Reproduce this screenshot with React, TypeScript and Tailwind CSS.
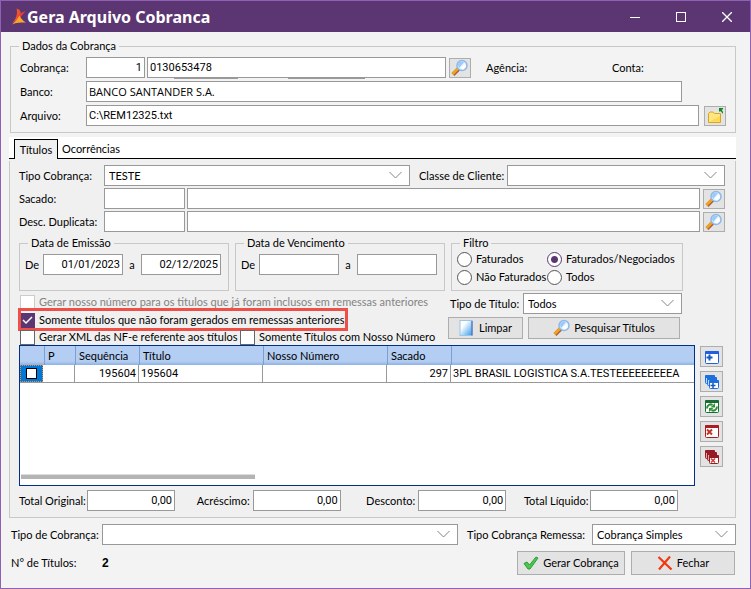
import { useState, type ReactNode } from 'react'

const FIELD = "h-[21px] border border-[#999] bg-white px-[2px] outline-none min-w-0"
const VALUE_FONT = "font-['Roboto',sans-serif]"
const BUTTON = 'flex shrink-0 items-center justify-center border border-[#adadad] bg-[#e3e3e3]'
const GROUP = 'min-w-0 border border-[#c8c8c8]'
const LEGEND = 'ml-[8px] h-[14px] px-[3px] leading-[14px]'

function AppLogo() {
  return (
    <svg width="15" height="18" viewBox="0 0 15 18">
      <path d="M4.500 0.500 C7.500 1 9 3 8.500 6 L6 11 L0 15.500 C4 11 6 6 4.500 0.500 Z" fill="#f0532d" />
      <path d="M13.500 3 L9 8.500 L5 11 L7 6 Z" fill="#ee3f34" />
      <path d="M7.500 7.500 C9 10.500 11 13 14 14.500 C9 14.500 4 14.500 0 16.500 C3 14 5.500 11 7.500 7.500 Z" fill="#fba52c" />
    </svg>
  )
}

function Magnifier() {
  return (
    <svg width="18" height="18" viewBox="0 0 18 18">
      <path d="M2 15.500 L8 9.500" stroke="#a8623a" strokeWidth="4" />
      <path d="M1.500 15 L7.500 9" stroke="#f5a31f" strokeWidth="2.500" />
      <circle cx="11" cy="6.500" r="5" fill="#d9efff" stroke="#8eb7ea" strokeWidth="1.500" />
      <path d="M7 6 A4 4 0 0 1 11 2.500 L13 3 L8 9 Z" fill="#9cc9f7" />
      <path d="M9 9 L14 4 L15 8 L12 10.500 Z" fill="#fff" />
    </svg>
  )
}

function FolderIcon() {
  return (
    <svg width="18" height="18" viewBox="0 0 18 18">
      <path d="M2.500 15.500 V6.500 L4 5 H7 L8.500 6.500 H14.500 V15.500 Z" fill="#ffe680" stroke="#d9a51c" />
      <path d="M4 14.500 H14 V9 Z" fill="#ffd84d" />
      <path d="M13 1 H17 V2.500 H15.500 L17 5 V7 L15.500 5 L14 4 L13 5 Z" fill="#0a8a1c" />
    </svg>
  )
}

function WindowShape({ x, y, size, color, fill = '#fff' }: { x: number; y: number; size: number; color: string; fill?: string }) {
  return (
    <g>
      <rect x={x + 0.5} y={y + 0.5} width={size - 1} height={size - 2} rx="1" fill={fill} stroke={color} />
      <rect x={x} y={y} width={size} height="3" rx="1" fill={color} />
    </g>
  )
}

function GridIcon({ kind }: { kind: string }) {
  return (
    <svg width="16" height="16" viewBox="0 0 16 16">
      {kind === 'add' && (
        <>
          <WindowShape x={1} y={2} size={14} color="#1f5fe0" />
          <path d="M5.500 5.500 V11.500 M2.500 8.500 H8.500" stroke="#1458c8" strokeWidth="2" />
        </>
      )}
      {kind === 'addAll' && (
        <>
          <WindowShape x={1} y={1} size={10} color="#1d6fe0" fill="#b9dcff" />
          <WindowShape x={3} y={3} size={10} color="#1d6fe0" fill="#b9dcff" />
          <WindowShape x={5} y={6} size={10} color="#1d6fe0" />
          <path d="M9 9 V14 M6.500 11.500 H11.500" stroke="#1458c8" strokeWidth="1.500" />
        </>
      )}
      {kind === 'refresh' && (
        <>
          <WindowShape x={1} y={1} size={14} color="#1a6b35" />
          <path d="M3 9.500 C3 6 6.500 4.500 8.500 6" stroke="#2f8f3a" strokeWidth="2" fill="none" />
          <path d="M6.500 8.500 H11 V4 Z" fill="#2f8f3a" />
          <path d="M13 7.500 C13 11 9.500 12.500 7.500 11" stroke="#2f8f3a" strokeWidth="2" fill="none" />
          <path d="M9.500 9 H5 V13 Z" fill="#2f8f3a" />
        </>
      )}
      {kind === 'remove' && (
        <>
          <WindowShape x={1} y={1} size={14} color="#a81c22" />
          <path d="M3 5.500 L8 10.500 M8 5.500 L3 10.500" stroke="#c83222" strokeWidth="2" />
        </>
      )}
      {kind === 'removeAll' && (
        <>
          <WindowShape x={1} y={1} size={10} color="#951c24" fill="#e3a5a5" />
          <WindowShape x={3} y={3} size={10} color="#951c24" fill="#e3a5a5" />
          <WindowShape x={5} y={6} size={10} color="#951c24" />
          <path d="M7 9.500 L11 13.500 M11 9.500 L7 13.500" stroke="#d04030" strokeWidth="1.500" />
        </>
      )}
    </svg>
  )
}

function Select({ id, options, className }: { id: string; options: string[]; className: string }) {
  return (
    <div className={`relative ${className}`}>
      <select id={id} className="block h-[21px] w-full appearance-none border border-[#999] bg-white pl-[4px] pr-[24px] leading-[18px] outline-none">
        {options.map((o) => (
          <option key={o}>{o}</option>
        ))}
      </select>
      <svg className="pointer-events-none absolute right-[8px] top-[6px]" width="13" height="8" viewBox="0 0 13 8">
        <path d="M0.500 1 L6.500 7 L12.500 1" fill="none" stroke="#858585" />
      </svg>
    </div>
  )
}

function SearchButton({ label }: { label: string }) {
  return (
    <button type="button" aria-label={label} className={`${BUTTON} h-[20px] w-[22px]`}>
      <Magnifier />
    </button>
  )
}

function Check({ id, children, checked = false, disabled = false }: { id: string; children: ReactNode; checked?: boolean; disabled?: boolean }) {
  return (
    <div className="relative flex items-center gap-[4px] whitespace-nowrap pl-[1px]">
      <input
        id={id}
        type="checkbox"
        defaultChecked={checked}
        disabled={disabled}
        className="peer h-[15px] w-[15px] appearance-none border border-[#666] bg-white checked:border-[#5b3672] checked:bg-[#5b3672] disabled:border-[#ccc]"
      />
      <svg className="pointer-events-none absolute left-[3px] hidden peer-checked:block" width="11" height="9" viewBox="0 0 11 9">
        <path d="M1 4 L4 7 L10 1" fill="none" stroke="#fff" strokeWidth="1.500" />
      </svg>
      <label htmlFor={id} className={disabled ? 'text-[#838383]' : ''}>
        {children}
      </label>
    </div>
  )
}

function DateRange({ id, legend, from, to }: { id: string; legend: string; from: string; to: string }) {
  return (
    <fieldset className={`${GROUP} w-[210px]`}>
      <legend className={LEGEND}>{legend}</legend>
      <div className="flex items-center px-[5px] pt-[4px]">
        <label htmlFor={`${id}-from`} className="w-[18px]">De</label>
        <input id={`${id}-from`} defaultValue={from} className={`${FIELD} ${VALUE_FONT} w-[80px] text-right`} />
        <label htmlFor={`${id}-to`} className="w-[18px] text-center">a</label>
        <input id={`${id}-to`} defaultValue={to} className={`${FIELD} ${VALUE_FONT} w-[80px] text-right`} />
      </div>
    </fieldset>
  )
}

function LookupRow({ id, label }: { id: string; label: string }) {
  return (
    <div className="flex items-center">
      <label htmlFor={id} className="w-[85px] shrink-0">{label}</label>
      <input id={id} className={`${FIELD} w-[81px]`} />
      <input aria-label={`${label} descrição`} className={`${FIELD} ml-[2px] mr-[3px] flex-1`} />
      <SearchButton label={`Localizar ${label}`} />
    </div>
  )
}

const filters = ['Faturados', 'Faturados/Negociados', 'Não Faturados', 'Todos']

const totals = [
  { id: 'original', label: 'Total Original:', width: 'w-[68px]' },
  { id: 'acrescimo', label: 'Acréscimo:', width: 'w-[60px]' },
  { id: 'desconto', label: 'Desconto:', width: 'w-[60px]' },
  { id: 'liquido', label: 'Total Líquido:', width: 'w-[66px]' },
]

const gridActions = [
  { kind: 'add', label: 'Incluir' },
  { kind: 'addAll', label: 'Incluir todos' },
  { kind: 'refresh', label: 'Atualizar' },
  { kind: 'remove', label: 'Excluir' },
  { kind: 'removeAll', label: 'Excluir todos' },
]

const columns = ['', 'P', 'Sequência', 'Título', 'Nosso Número', 'Sacado', '']

function TitleBar() {
  return (
    <header className="flex h-[31px] items-center bg-[#5b3672] pl-[11px] text-white">
      <AppLogo />
      <h1 className="flex-1 font-['Noto_Sans',sans-serif] text-[16px] font-bold leading-[30px]">Gera Arquivo Cobranca</h1>
      <button type="button" aria-label="Minimizar" className="flex h-full w-[46px] items-center justify-center">
        <svg width="10" height="10"><path d="M0 5.500 H10" stroke="#fff" /></svg>
      </button>
      <button type="button" aria-label="Maximizar" className="flex h-full w-[46px] items-center justify-center">
        <svg width="10" height="10"><rect x="0.500" y="0.500" width="9" height="9" fill="none" stroke="#fff" /></svg>
      </button>
      <button type="button" aria-label="Fechar janela" className="flex h-full w-[46px] items-center justify-center">
        <svg width="10" height="10"><path d="M0 0 L10 10 M10 0 L0 10" stroke="#fff" strokeWidth="1.300" /></svg>
      </button>
    </header>
  )
}

function BillingData() {
  return (
    <fieldset className={GROUP}>
      <legend className={LEGEND}>Dados da Cobrança</legend>
      <div className="flex flex-col gap-[3px] px-[9px] pb-[6px] pt-[4px]">
        <div className="relative flex items-center">
          <label htmlFor="cobranca" className="w-[66px] shrink-0">Cobrança:</label>
          <input id="cobranca" defaultValue="1" className={`${FIELD} ${VALUE_FONT} w-[59px] text-right`} />
          <input aria-label="Número da cobrança" defaultValue="0130653478" className={`${FIELD} ${VALUE_FONT} ml-[2px] mr-[3px] flex-1`} />
          <SearchButton label="Localizar cobrança" />
          <span className="ml-[15px] w-[126px]">Agência:</span>
          <span className="w-[114px]">Conta:</span>
          <span className="absolute left-[154px] top-full h-px w-[64px] bg-[#999]" />
          <span className="absolute left-[268px] top-full h-px w-[77px] bg-[#999]" />
        </div>
        <div className="flex items-center">
          <label htmlFor="banco" className="w-[66px] shrink-0">Banco:</label>
          <input id="banco" defaultValue="BANCO SANTANDER S.A." className={`${FIELD} mr-[44px] flex-1 font-['Open_Sans',sans-serif]`} />
        </div>
        <div className="flex items-center">
          <label htmlFor="arquivo" className="w-[66px] shrink-0">Arquivo:</label>
          <input id="arquivo" defaultValue="C:\REM12325.txt" className={`${FIELD} ${VALUE_FONT} mr-[5px] flex-1`} />
          <button type="button" aria-label="Abrir arquivo" className={`${BUTTON} h-[20px] w-[22px]`}>
            <FolderIcon />
          </button>
        </div>
      </div>
    </fieldset>
  )
}

function TitlesGrid() {
  return (
    <div className="flex gap-[5px] pr-[2px]">
      <div className="flex h-[141px] min-w-0 flex-1 flex-col justify-between overflow-hidden border border-[#00308c] bg-white">
        <table className="w-full table-fixed border-separate border-spacing-0">
          <colgroup>
            <col className="w-[24px]" />
            <col className="w-[31px]" />
            <col className="w-[64px]" />
            <col className="w-[124px]" />
            <col className="w-[124px]" />
            <col className="w-[64px]" />
            <col />
          </colgroup>
          <thead>
            <tr className="h-[19px] bg-linear-to-b from-[#b3cef2] from-80% to-[#8fb2e2]">
              {columns.map((c, i) => (
                <th key={i} className={`p-0 pl-[3px] text-left font-normal ${i > 0 ? 'border-l border-[#7c9fd3]' : ''}`}>{c}</th>
              ))}
            </tr>
          </thead>
          <tbody className="font-['Roboto',sans-serif] [&_td]:h-[18px] [&_td]:whitespace-nowrap [&_td]:border-b [&_td]:border-[#999] [&_td]:p-0">
            <tr>
              <td>
                <div className="flex h-[17px] w-[23px] items-center justify-center border border-dotted border-[#ff8728] bg-[#0078d7]">
                  <input type="checkbox" aria-label="Selecionar título" className="h-[11px] w-[11px] appearance-none border border-black bg-white" />
                </div>
              </td>
              <td className="border-r" />
              <td className="border-r text-right"><span className="pr-[2px]">195604</span></td>
              <td className="border-r"><span className="pl-[2px]">195604</span></td>
              <td className="border-r" />
              <td className="border-r text-right"><span className="pr-[2px]">297</span></td>
              <td><span className="pl-[2px]">3PL BRASIL LOGISTICA S.A.TESTEEEEEEEEEA</span></td>
            </tr>
          </tbody>
        </table>
        <div className="mb-[6px] ml-px h-[5px] w-[234px] border-t border-[#ddd] bg-[#b4b4b4]" />
      </div>
      <div className="flex flex-col gap-[4px] pt-px">
        {gridActions.map((a) => (
          <button key={a.kind} type="button" aria-label={a.label} className={`${BUTTON} h-[21px] w-[23px]`}>
            <GridIcon kind={a.kind} />
          </button>
        ))}
      </div>
    </div>
  )
}

function TitlesPanel() {
  const [filter, setFilter] = useState('Faturados/Negociados')

  return (
    <div className="border-x border-b border-[#c8c8c8] pb-[6px] pl-[9px] pr-[10px] pt-[4px]">
      <div className="flex flex-col gap-[2px]">
        <div className="flex items-center">
          <label htmlFor="tipo" className="w-[85px] shrink-0">Tipo Cobrança:</label>
          <Select id="tipo" options={['TESTE']} className="min-w-0 flex-[306]" />
          <label htmlFor="classe" className="ml-[9px] w-[88px] shrink-0 whitespace-nowrap">Classe de Cliente:</label>
          <Select id="classe" options={['']} className="min-w-0 flex-[218]" />
        </div>
        <LookupRow id="sacado" label="Sacado:" />
        <LookupRow id="duplicata" label="Desc. Duplicata:" />
      </div>

      <div className="mt-[4px] flex h-[55px] gap-[6px]">
        <DateRange id="emissao" legend="Data de Emissão" from="01/01/2023" to="02/12/2025" />
        <DateRange id="vencimento" legend="Data de Vencimento" from="" to="" />
        <fieldset className={`${GROUP} w-[232px]`}>
          <legend className={LEGEND}>Filtro</legend>
          <div className="grid grid-cols-[90px_1fr] pl-[5px]">
            {filters.map((f) => (
              <label key={f} className="flex h-[18px] items-center gap-[4px] whitespace-nowrap">
                <input
                  type="radio"
                  name="filtro"
                  checked={filter === f}
                  onChange={() => setFilter(f)}
                  className="h-[15px] w-[15px] shrink-0 appearance-none rounded-full border border-[#555] bg-white checked:border-[#5b3672] checked:bg-[radial-gradient(circle,#5b3672_3px,#fff_4px)]"
                />
                {f}
              </label>
            ))}
          </div>
        </fieldset>
      </div>

      <div className="mt-[2px] flex">
        <div className="grid w-[429px] shrink-0 grid-rows-[18px_18px_16px]">
          <Check id="nosso-numero" disabled>Gerar nosso número para os titulos que já foram inclusos em remessas anteriores</Check>
          <div className="relative flex">
            <Check id="nao-gerados" checked>Somente títulos que não foram gerados em remessas anteriores</Check>
            <span className="pointer-events-none absolute -bottom-[2px] -left-px -top-[3px] w-[330px] border-3 border-[#ee5048]" />
          </div>
          <div className="flex">
            <div className="flex w-[220px]">
              <Check id="xml">Gerar XML das NF-e referente aos títulos</Check>
            </div>
            <Check id="com-numero">Somente Títulos com Nosso Número</Check>
          </div>
        </div>
        <div className="flex w-[234px] flex-col gap-[3px]">
          <div className="flex items-center">
            <label htmlFor="tipo-titulo" className="w-[75px] shrink-0 pl-[2px]">Tipo de Título:</label>
            <Select id="tipo-titulo" options={['Todos']} className="flex-1" />
          </div>
          <div className="flex gap-[5px] pr-[2px]">
            <button type="button" className={`${BUTTON} h-[22px] w-[75px] gap-[6px]`}>
              <svg width="14" height="16" viewBox="0 0 14 16">
                <defs>
                  <linearGradient id="page" x1="0" y1="0" x2="1" y2="1">
                    <stop offset="0.300" stopColor="#fff" />
                    <stop offset="1" stopColor="#2f9be8" />
                  </linearGradient>
                </defs>
                <rect x="1" y="0.500" width="12" height="15" fill="url(#page)" stroke="#9cc4e8" />
                <path d="M13 1 V15.500" stroke="#3454b8" />
              </svg>
              Limpar
            </button>
            <button type="button" className={`${BUTTON} h-[22px] flex-1 gap-[3px]`}>
              <Magnifier />
              Pesquisar Títulos
            </button>
          </div>
        </div>
      </div>

      <TitlesGrid />

      <div className="mt-[4px] flex justify-between pr-[47px]">
        {totals.map((t) => (
          <div key={t.id} className="flex items-center whitespace-nowrap text-right">
            <label htmlFor={t.id} className={`${t.width} pr-[3px]`}>{t.label}</label>
            <input id={t.id} defaultValue="0,00" className={`${FIELD} ${VALUE_FONT} w-[88px] text-right`} />
          </div>
        ))}
      </div>
    </div>
  )
}

export default function App() {
  return (
    <div className="flex min-h-screen flex-col border border-[#8f60b4] bg-[#f3f3f3] font-['Lato',Arial,sans-serif] text-[11px] leading-[14px] text-black">
      <TitleBar />
      <main className="flex flex-col pl-[9px] pr-[14px] pt-[7px]">
        <BillingData />

        <div className="-ml-px mt-[4px] bg-[#f0f0f0]">
          <div role="tablist" className="flex h-[22px] items-end border-b border-black bg-white pl-[5px]">
            <button type="button" role="tab" aria-selected="true" className="-mb-px h-[20px] w-[44px] border border-b-0 border-black bg-[#f0f0f0]">
              Títulos
            </button>
            <button type="button" role="tab" aria-selected="false" className="h-[18px] px-[4px]">
              Ocorrências
            </button>
          </div>
          <div className="pt-[2px]">
            <TitlesPanel />
          </div>
        </div>

        <div className="mt-[6px] flex items-center">
          <label htmlFor="tipo-cobranca" className="w-[92px] shrink-0 pl-px">Tipo de Cobrança:</label>
          <Select id="tipo-cobranca" options={['']} className="flex-1" />
          <label htmlFor="remessa" className="ml-[9px] w-[125px] shrink-0">Tipo Cobrança Remessa:</label>
          <Select id="remessa" options={['Cobrança Simples']} className="w-[144px]" />
        </div>

        <footer className="mt-[6px] flex items-center gap-[6px] pr-px">
          <span className="w-[86px] pl-px">N° de Títulos:</span>
          <strong className="flex-1 font-['Liberation_Sans',sans-serif] text-[12px]">2</strong>
          <button type="button" className={`${BUTTON} h-[24px] w-[108px] gap-[4px]`}>
            <svg width="16" height="14" viewBox="0 0 16 14">
              <path d="M1 7.500 L4 6 L6.500 9 L13 1 L15 2 L7 13 H5 Z" fill="#4cc94a" stroke="#2f9a38" />
            </svg>
            Gerar Cobrança
          </button>
          <button type="button" className={`${BUTTON} h-[24px] w-[104px] gap-[4px]`}>
            <svg width="16" height="14" viewBox="0 0 16 14">
              <path d="M1.500 1 L14.500 13.500 M13 0.500 L2 13.500" stroke="#f03a12" strokeWidth="2.200" fill="none" />
            </svg>
            Fechar
          </button>
        </footer>
      </main>
    </div>
  )
}
